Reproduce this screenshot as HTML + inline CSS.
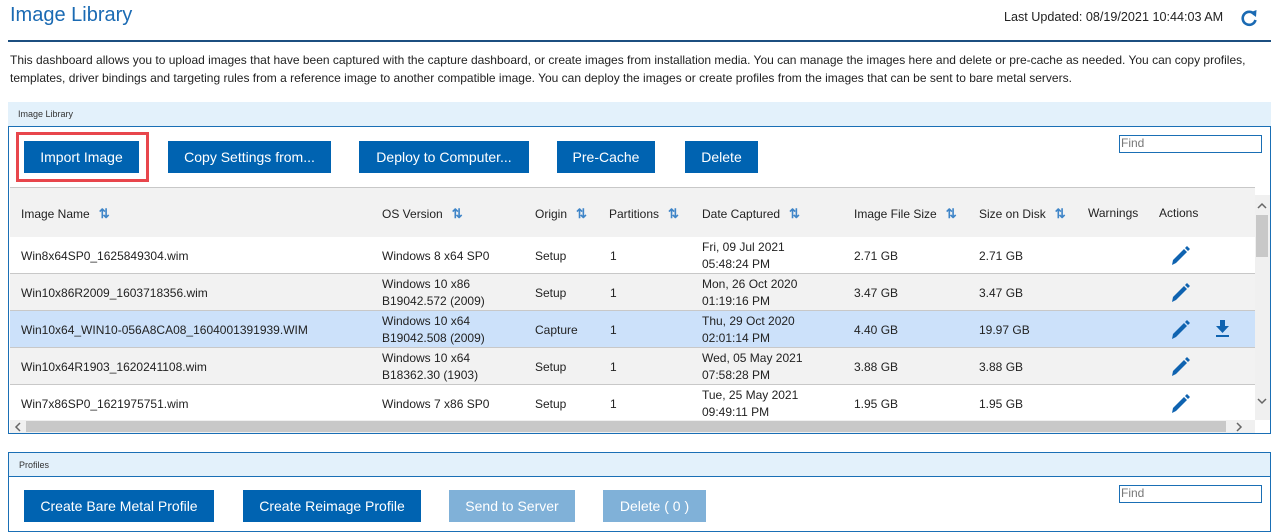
<!DOCTYPE html>
<html><head><style>
*{box-sizing:border-box;margin:0;padding:0}
body{width:1282px;height:528px;overflow:hidden;background:#fff;font-family:"Liberation Sans",Arial,sans-serif;color:#222;position:relative}
.a{position:absolute}
.btn{position:absolute;background:#0063b1;color:#fff;font-size:14px;display:flex;align-items:center;justify-content:center}
.btn.l{background:#80b1d8}
.th{position:absolute;top:206px;font-size:12px;color:#222}
.s{color:#3f85c8;font-size:13px;font-weight:bold;margin-left:9px;letter-spacing:-3px}
.row{position:absolute;left:10px;width:1245px;height:37px;border-bottom:1px solid #c8c8c8;font-size:12px}
.row div{position:absolute;line-height:17px}
.find{position:absolute;border:1px solid #1a6fb5;font-size:12px;color:#777;padding-left:1px;line-height:15px;background:#fff}
</style></head><body>
<div class="a" style="left:10px;top:4px;font-size:20px;color:#1a6ab3">Image Library</div>
<div class="a" style="left:1004px;top:10px;font-size:12.6px">Last Updated: 08/19/2021 10:44:03 AM</div>
<svg class="a" style="left:1240px;top:9px" width="18" height="18" viewBox="0 0 18 18"><path d="M14.5 5.5A6.5 6.5 0 1 0 15.5 11" fill="none" stroke="#1a6ab3" stroke-width="2.6"/><path d="M10 3.5L16.5 1L16 8Z" fill="#1a6ab3"/></svg>
<div class="a" style="left:8px;top:40px;width:1263px;height:2px;background:#1c4f80"></div>
<div class="a" style="left:10px;top:51px;width:1265px;font-size:12px;line-height:18px">This dashboard allows you to upload images that have been captured with the capture dashboard, or create images from installation media. You can manage the images here and delete or pre-cache as needed. You can copy profiles, templates, driver bindings and targeting rules from a reference image to another compatible image. You can deploy the images or create profiles from the images that can be sent to bare metal servers.</div>

<div class="a" style="left:8px;top:102px;width:1263px;height:332px;border:1px solid #1a6fb5;border-top:none"></div>
<div class="a" style="left:8px;top:102px;width:1263px;height:25px;background:#e3f1fb;border-bottom:1px solid #1a6fb5;font-size:9px;padding:7px 0 0 10px;color:#333">Image Library</div>
<div class="a" style="left:16px;top:132px;width:133px;height:50px;border:3px solid #e8464c"></div>
<div class="btn" style="left:24px;top:141px;width:115px;height:32px">Import Image</div>
<div class="btn" style="left:168px;top:141px;width:163px;height:32px">Copy Settings from...</div>
<div class="btn" style="left:359px;top:141px;width:170px;height:32px">Deploy to Computer...</div>
<div class="btn" style="left:557px;top:141px;width:98px;height:32px">Pre-Cache</div>
<div class="btn" style="left:685px;top:141px;width:73px;height:32px">Delete</div>
<div class="find" style="left:1119px;top:135px;width:143px;height:18px">Find</div>

<div class="a" style="left:10px;top:187px;width:1245px;height:51px;background:#f2f2f2;border-top:1px solid #c8c8c8"></div>
<div class="th" style="left:21px">Image Name<span class="s">⇅</span></div>
<div class="th" style="left:382px">OS Version<span class="s">⇅</span></div>
<div class="th" style="left:535px">Origin<span class="s">⇅</span></div>
<div class="th" style="left:609px">Partitions<span class="s">⇅</span></div>
<div class="th" style="left:702px">Date Captured<span class="s">⇅</span></div>
<div class="th" style="left:854px">Image File Size<span class="s">⇅</span></div>
<div class="th" style="left:979px">Size on Disk<span class="s">⇅</span></div>
<div class="th" style="left:1088px">Warnings</div>
<div class="th" style="left:1159px">Actions</div>

<div class="row" style="top:237px;background:#fff"><div style="left:11px;top:11px">Win8x64SP0_1625849304.wim</div><div style="left:372px;top:11px">Windows 8 x64 SP0</div><div style="left:525px;top:11px">Setup</div><div style="left:600px;top:11px">1</div><div style="left:692px;top:2px">Fri, 09 Jul 2021<br>05:48:24 PM</div><div style="left:844px;top:11px">2.71 GB</div><div style="left:969px;top:11px">2.71 GB</div></div>
<div class="row" style="top:274px;background:#f2f2f2"><div style="left:11px;top:11px">Win10x86R2009_1603718356.wim</div><div style="left:372px;top:2px">Windows 10 x86<br>B19042.572 (2009)</div><div style="left:525px;top:11px">Setup</div><div style="left:600px;top:11px">1</div><div style="left:692px;top:2px">Mon, 26 Oct 2020<br>01:19:16 PM</div><div style="left:844px;top:11px">3.47 GB</div><div style="left:969px;top:11px">3.47 GB</div></div>
<div class="row" style="top:311px;background:#cce1fa"><div style="left:11px;top:11px">Win10x64_WIN10-056A8CA08_1604001391939.WIM</div><div style="left:372px;top:2px">Windows 10 x64<br>B19042.508 (2009)</div><div style="left:525px;top:11px">Capture</div><div style="left:600px;top:11px">1</div><div style="left:692px;top:2px">Thu, 29 Oct 2020<br>02:01:14 PM</div><div style="left:844px;top:11px">4.40 GB</div><div style="left:969px;top:11px">19.97 GB</div></div>
<div class="row" style="top:348px;background:#f2f2f2"><div style="left:11px;top:11px">Win10x64R1903_1620241108.wim</div><div style="left:372px;top:2px">Windows 10 x64<br>B18362.30 (1903)</div><div style="left:525px;top:11px">Setup</div><div style="left:600px;top:11px">1</div><div style="left:692px;top:2px">Wed, 05 May 2021<br>07:58:28 PM</div><div style="left:844px;top:11px">3.88 GB</div><div style="left:969px;top:11px">3.88 GB</div></div>
<div class="row" style="top:385px;background:#fff;border:none"><div style="left:11px;top:11px">Win7x86SP0_1621975751.wim</div><div style="left:372px;top:11px">Windows 7 x86 SP0</div><div style="left:525px;top:11px">Setup</div><div style="left:600px;top:11px">1</div><div style="left:692px;top:2px">Tue, 25 May 2021<br>09:49:11 PM</div><div style="left:844px;top:11px">1.95 GB</div><div style="left:969px;top:11px">1.95 GB</div></div>

<svg class="a" style="left:1170px;top:245px" width="22" height="180" viewBox="0 0 22 180">
<g fill="#0f63b0">
<path d="M2 20L3 15L14 4L17 7L6 18Z M15 3L17 1L20 4L18 6Z"/>
<path transform="translate(0,37)" d="M2 20L3 15L14 4L17 7L6 18Z M15 3L17 1L20 4L18 6Z"/>
<path transform="translate(0,74)" d="M2 20L3 15L14 4L17 7L6 18Z M15 3L17 1L20 4L18 6Z"/>
<path transform="translate(0,111)" d="M2 20L3 15L14 4L17 7L6 18Z M15 3L17 1L20 4L18 6Z"/>
<path transform="translate(0,148)" d="M2 20L3 15L14 4L17 7L6 18Z M15 3L17 1L20 4L18 6Z"/>
</g></svg>
<svg class="a" style="left:1214px;top:319px" width="18" height="20" viewBox="0 0 18 20"><path d="M6 1H11V7H15L8.5 14L2 7H6Z M2 16H15V18H2Z" fill="#0f63b0"/></svg>

<div class="a" style="left:1255px;top:195px;width:15px;height:225px;background:#f0f0f0"></div>
<div class="a" style="left:1256px;top:215px;width:12px;height:42px;background:#c8c8c8"></div>
<svg class="a" style="left:1257px;top:202px" width="10" height="8"><path d="M1 6L5 2L9 6" fill="none" stroke="#666" stroke-width="1.5"/></svg>
<svg class="a" style="left:1257px;top:397px" width="10" height="8"><path d="M1 2L5 6L9 2" fill="none" stroke="#666" stroke-width="1.5"/></svg>
<div class="a" style="left:10px;top:420px;width:1245px;height:13px;background:#f0f0f0"></div>
<div class="a" style="left:26px;top:421px;width:1200px;height:11px;background:#c8c8c8"></div>
<svg class="a" style="left:14px;top:422px" width="8" height="10"><path d="M6 1L2 5L6 9" fill="none" stroke="#666" stroke-width="1.5"/></svg>
<svg class="a" style="left:1235px;top:422px" width="8" height="10"><path d="M2 1L6 5L2 9" fill="none" stroke="#666" stroke-width="1.5"/></svg>

<div class="a" style="left:8px;top:452px;width:1263px;height:80px;border:1px solid #1a6fb5"></div>
<div class="a" style="left:8px;top:452px;width:1263px;height:25px;background:#e3f1fb;border:1px solid #1a6fb5;font-size:9px;padding:7px 0 0 10px;color:#333">Profiles</div>
<div class="btn" style="left:24px;top:490px;width:190px;height:32px">Create Bare Metal Profile</div>
<div class="btn" style="left:243px;top:490px;width:178px;height:32px">Create Reimage Profile</div>
<div class="btn l" style="left:449px;top:490px;width:126px;height:32px">Send to Server</div>
<div class="btn l" style="left:603px;top:490px;width:103px;height:32px">Delete ( 0 )</div>
<div class="find" style="left:1119px;top:485px;width:143px;height:18px">Find</div>
</body></html>
